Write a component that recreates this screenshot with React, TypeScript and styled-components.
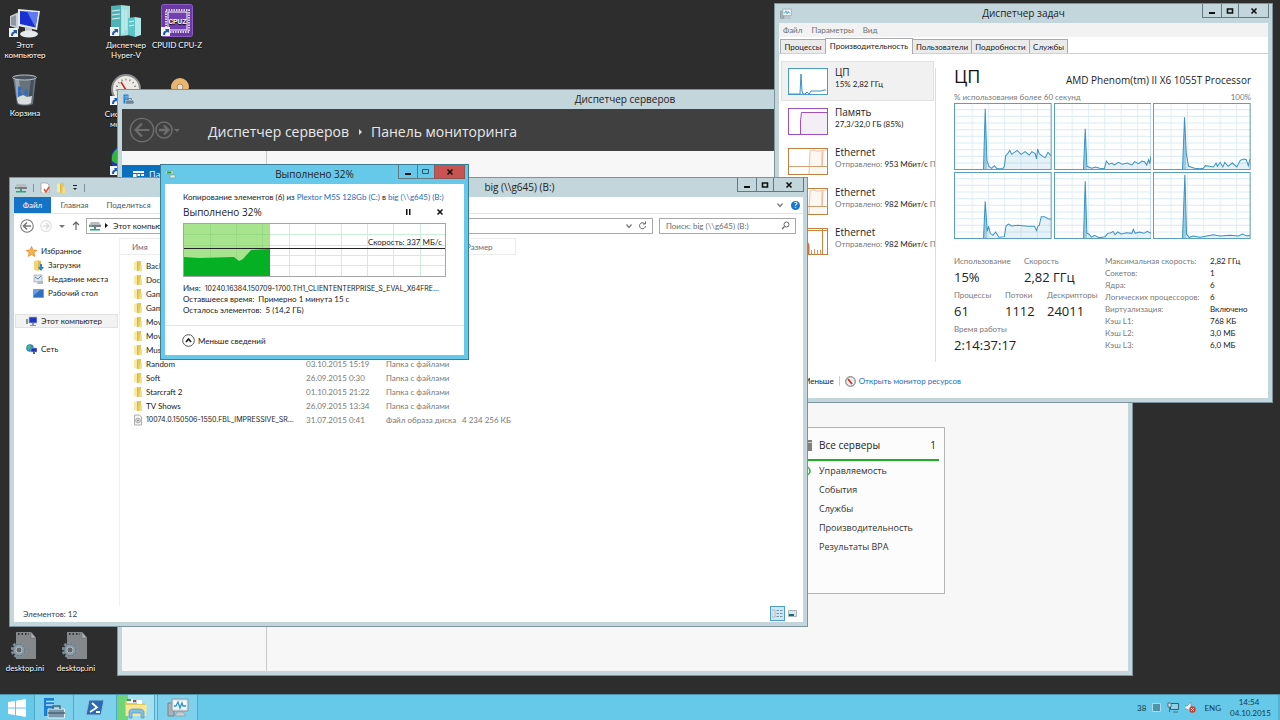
import React from "react";
import styled, { createGlobalStyle, css } from "styled-components";

const wide = `"Open Sans", "Noto Sans", sans-serif`;

const GlobalStyle = createGlobalStyle`
  *, *::before, *::after { box-sizing: border-box; }
  body {
    margin: 0;
    background: #2d2d2d;
    color: #222;
    font: 8px/12px Lato, "Noto Sans", sans-serif;
  }
  button, input { font: inherit; color: inherit; margin: 0; padding: 0; border: 0; background: none; }
  a { color: #1c6cc0; text-decoration: none; }
  h1, h2, h3, p, ul, dl, dd { margin: 0; padding: 0; font-weight: 400; }
  h1, h2, h3 { font-family: ${wide}; }
  ul { list-style: none; }
  svg { display: block; flex: none; }
`;

/* ---------- Desktop ---------- */

const Screen = styled.div`
  display: flex;
  flex-direction: column;
  min-height: 100vh;
`;

const Desktop = styled.main`
  position: relative;
  flex: 1;
  overflow: hidden;
`;

const Shortcut = styled.button<{ $x: number; $y: number }>`
  position: absolute;
  left: ${(p) => p.$x}px;
  top: ${(p) => p.$y}px;
  width: 52px;
  display: flex;
  flex-direction: column;
  align-items: center;
  gap: 2px;
  color: #fff;
  line-height: 10px;
  text-align: center;
  text-shadow: 0 1px 1px #000;
  white-space: nowrap;
`;

/* ---------- Window frame ---------- */

const Frame = styled.section<{ $x: number; $y: number; $w: number; $h: number; $active?: boolean }>`
  position: absolute;
  left: ${(p) => p.$x}px;
  top: ${(p) => p.$y}px;
  width: ${(p) => p.$w}px;
  height: ${(p) => p.$h}px;
  display: flex;
  flex-direction: column;
  padding: 0 4px 4px;
  border: 1px solid ${(p) => (p.$active ? "#3c7c92" : "#7d949c")};
  background: ${(p) => (p.$active ? "#66c9e9" : "#c3d6dc")};
`;

const TitleBar = styled.header<{ $lead?: number }>`
  display: grid;
  grid-template-columns: ${(p) => (p.$lead ? `${p.$lead}px 1fr auto` : "1fr auto 1fr")};
  align-items: center;
  flex: none;
  height: 19px;
`;

const TitleText = styled.h2`
  align-self: start;
  font-size: 10px;
  line-height: 18px;
  text-align: center;
`;

const TitleIcons = styled.div`
  display: flex;
  align-items: center;
  gap: 6px;
  padding-left: 1px;
`;

const Caption = styled.div`
  display: flex;
  justify-self: end;
  align-self: start;
  margin-right: -1px;
`;

const captionWidth = { min: 20, max: 18, close: 31 };

const CaptionButton = styled.button<{ $kind: "min" | "max" | "close"; $danger?: boolean }>`
  display: flex;
  align-items: center;
  justify-content: center;
  width: ${(p) => captionWidth[p.$kind]}px;
  height: 14px;
  margin-left: -1px;
  border: 1px solid #66787f;
  border-top: 0;
  ${(p) => p.$danger && css`background: #c75450; border-color: #8e5654;`}
`;

const Client = styled.div<{ $bg?: string }>`
  display: flex;
  flex-direction: column;
  flex: 1;
  min-height: 0;
  background: ${(p) => p.$bg ?? "#fff"};
`;

function WindowButtons({ danger }: { danger?: boolean }) {
  return (
    <Caption>
      <CaptionButton $kind="min" aria-label="Свернуть">
        <svg width="8" height="8"><path d="M1 5h6v2H1z" fill="#111" /></svg>
      </CaptionButton>
      <CaptionButton $kind="max" aria-label="Развернуть">
        <svg width="8" height="8">
          {danger
            ? <path d="M.5 1.500h6v4h-6z" fill="none" stroke="#2c5868" />
            : <path d="M1.500 2h5v4h-5z" fill="none" stroke="#111" strokeWidth="1.600" />}
        </svg>
      </CaptionButton>
      <CaptionButton $kind="close" $danger={danger} aria-label="Закрыть">
        <svg width="8" height="8"><path d="M1.500 1.500l5 5M6.500 1.500l-5 5" stroke="#111" strokeWidth="1.600" /></svg>
      </CaptionButton>
    </Caption>
  );
}

/* ---------- Server manager ---------- */

const ManagerHeader = styled.div`
  display: flex;
  align-items: center;
  flex: none;
  height: 42px;
  padding-left: 7px;
  background: #404040;
  color: #e8e8e8;
`;

const Crumbs = styled.h1`
  display: flex;
  align-items: center;
  gap: 7px;
  margin-left: 27px;
  padding-top: 3px;
  font-size: 14px;
  line-height: 20px;
`;

const ManagerBody = styled.div`
  display: flex;
  flex: 1;
`;

const ManagerNav = styled.nav`
  width: 145px;
  padding-top: 14px;
  border-right: 1px solid #c9c9c9;
`;

const ManagerNavItem = styled.a`
  display: flex;
  align-items: center;
  gap: 5px;
  height: 20px;
  padding-left: 11px;
  background: #0b6fc0;
  color: #fff;
  font-family: ${wide};
  font-size: 9px;
`;

const Dashboard = styled.div`
  flex: 1;
  display: flex;
  align-items: flex-start;
  padding: 276px 0 0 530px;
`;

const ServerCard = styled.article`
  width: 148px;
  height: 167px;
  padding: 7px 5px;
  border: 1px solid #b4b4b4;
  background: #fcfcfc;
`;

const CardHead = styled.h3`
  display: flex;
  align-items: center;
  height: 26px;
  padding: 0 3px 4px 0;
  border-bottom: 2px solid #1fae24;
  font-size: 10px;
  line-height: 20px;
`;

const CardName = styled.span`
  flex: 1;
  margin-left: 7px;
`;

const CardRow = styled.li`
  display: flex;
  align-items: center;
  height: 19px;
  padding-left: 16px;
  color: #333;
  font-family: ${wide};
  font-size: 9px;
  &:first-child { padding-left: 0; gap: 8px; }
`;

/* ---------- Task manager ---------- */

const MenuBar = styled.nav`
  display: flex;
  gap: 9px;
  flex: none;
  height: 14px;
  padding: 0 4px;
  background: #f2f2f2;
  color: #6f6f6f;
`;

const Tabs = styled.div`
  display: flex;
  align-items: flex-end;
  flex: none;
  height: 17px;
  padding-left: 2px;
  border-bottom: 1px solid #d0d0d0;
`;

const Tab = styled.button<{ $w: number; $on?: boolean }>`
  width: ${(p) => p.$w}px;
  height: ${(p) => (p.$on ? 16 : 14)}px;
  margin: 0 0 ${(p) => (p.$on ? -1 : 0)}px -1px;
  padding-bottom: ${(p) => (p.$on ? 2 : 0)}px;
  border: 1px solid #a9a9b2;
  border-bottom: 0;
  background: ${(p) => (p.$on ? "#fff" : "#ebebeb")};
  white-space: nowrap;
`;

const TaskBody = styled.div`
  display: flex;
  flex: 1;
  min-height: 0;
  padding: 7px 17px 0 2px;
`;

const MeterList = styled.ul`
  width: 155px;
  margin-right: 19px;
`;

const Meter = styled.li<{ $on?: boolean }>`
  display: flex;
  align-items: flex-start;
  gap: 6px;
  height: 40px;
  margin-right: 2px;
  padding: 6px 0 0 6px;
  border: 1px solid ${(p) => (p.$on ? "#e2e2e2" : "transparent")};
  background: ${(p) => (p.$on ? "#f1f1f1" : "transparent")};
  white-space: nowrap;
`;

const MeterText = styled.div`
  margin-top: -2px;
`;

const MeterName = styled.h3`
  font-size: 10px;
  line-height: 12px;
`;

const Muted = styled.span`
  color: #7a7a7a;
`;

const Divider = styled.div`
  width: 1px;
  height: 294px;
  margin: 7px 0 0 -20px;
  background: #dcdcdc;
`;

const Detail = styled.div`
  flex: 1;
  min-width: 0;
  padding-left: 18px;
`;

const Spread = styled.div`
  display: flex;
  justify-content: space-between;
  align-items: center;
  height: 30px;
  font: 10px/14px ${wide};
  padding-top: 8px;
`;

const BigName = styled.h1`
  color: #111;
  font-size: 18px;
  line-height: 24px;
  margin-top: -8px;
`;

const ScaleRow = styled.div`
  display: flex;
  justify-content: space-between;
  color: #7a7a7a;
  height: 12px;
`;

const GraphGrid = styled.div`
  display: grid;
  grid-template-columns: repeat(3, 1fr);
  gap: 2px;
  svg { width: 100%; height: 67px; }
`;

const Stats = styled.div`
  display: flex;
  padding-top: 16px;
`;

const StatRows = styled.div`
  width: 151px;
`;

const StatRow = styled.dl`
  display: flex;
  height: 34px;
`;

const Stat = styled.div<{ $w: number }>`
  width: ${(p) => p.$w}px;
  white-space: nowrap;
  dt { color: #7a7a7a; }
  dd { font: 13px/20px ${wide}; }
`;

const Specs = styled.dl`
  display: grid;
  grid-template-columns: 105px auto;
  grid-auto-rows: 12px;
  white-space: nowrap;
  dt { color: #7a7a7a; }
`;

const TaskFooter = styled.footer`
  display: flex;
  align-items: center;
  flex: none;
  height: 34px;
  padding-left: 24px;
`;

const FooterRule = styled.span`
  width: 1px;
  height: 10px;
  margin: 0 5px;
  background: #ccc;
`;

const FooterLink = styled.a`
  display: flex;
  align-items: center;
  gap: 3px;
`;

const cores: string[] = [
  "88,198 93,17 98,172 104,190 112,196 120,188 128,197 145,197 150,190 154,158 160,152 166,142 172,154 188,142 200,154 212,146 224,156 232,146 242,152 246,168 249,138 254,152 264,160 272,164 280,148 289,158",
  "88,198 93,77 98,190 112,196 124,192 136,196 150,197 156,174 164,184 172,180 180,186 192,178 204,184 218,180 232,186 240,176 252,182 262,174 270,176 276,186 282,170 285,182 289,160",
  "88,198 94,43 99,150 106,190 124,196 140,197 150,196 156,188 168,190 180,192 188,180 192,190 200,178 208,192 214,178 224,190 236,180 250,192 260,172 270,168 278,170 284,188 289,168",
  "88,198 93,88 99,178 103,162 108,184 116,190 124,180 134,196 150,194 155,162 162,156 172,162 190,160 220,163 240,163 246,176 250,162 254,160 260,134 270,134 280,140 289,142",
  "88,198 93,28 98,184 104,186 112,196 120,190 134,197 152,194 160,184 170,182 176,178 182,188 190,180 200,186 216,182 232,184 236,172 242,184 254,180 268,184 278,178 289,184",
  "88,198 95,8 100,186 108,196 120,192 140,196 160,192 180,188 200,192 230,190 255,192 266,186 280,192 289,190",
];

function CoreGraph({ points }: { points: string }) {
  return (
    <svg viewBox="0 0 291 201" preserveAspectRatio="none">
      <rect width="291" height="201" fill="#fff" />
      {[54, 103, 151, 200, 249].map((x) => <path key={x} d={`M${x} 0V201`} stroke="#e2eff5" strokeWidth="3" />)}
      {[20, 40, 60, 80, 100, 120, 140, 160, 180].map((y) => <path key={y} d={`M0 ${y}H291`} stroke="#d9ebf3" strokeWidth="3" />)}
      <polygon points={`${points} 289,200`} fill="#3b94c4" fillOpacity="0.120" />
      <polygon points={points.split(" ").slice(0, 3).join(" ") + " 99,198"} fill="#3b94c4" fillOpacity="0.400" />
      <polyline points={points} fill="none" stroke="#3a93c3" strokeWidth="3" />
      <rect x="1.500" y="1.500" width="288" height="198" fill="none" stroke="#5b9fc0" strokeWidth="3" />
    </svg>
  );
}

function Thumb({ color, children }: { color: string; children: React.ReactNode }) {
  return (
    <svg width="41" height="28" fill="none">
      <rect x="0.500" y="0.500" width="39" height="26" fill="#fff" stroke={color} />
      {children}
    </svg>
  );
}

function EthernetThumb() {
  return (
    <Thumb color="#c08040">
      <path d="M21 26l1-23 2-1h3l1 1h9v23z" fill="#fdf7f2" />
      <path d="M21 26l1-23 2-1h3l1 1h4l2-1v17l1-17h4" stroke="#e8b090" strokeWidth="0.800" />
      <path d="M1 18.500h38" stroke="#d2a070" />
    </Thumb>
  );
}

const meters = [
  { name: "ЦП", plain: "15%  2,82 ГГц", on: true, art: (
    <Thumb color="#4a9cc3"><path d="M1 26h11l1-20 1 17 1 3h2l2-2 2 2 2-3h10l3-1h2" stroke="#3a93c3" /></Thumb>
  ) },
  { name: "Память", plain: "27,3/32,0 ГБ (85%)", art: (
    <Thumb color="#a050b8"><path d="M13 26V5h26v21z" fill="#f4eff6" /><path d="M12.500 26V13l1-8.500H39" stroke="#a050b8" /></Thumb>
  ) },
  { name: "Ethernet", rate: "953 Мбит/с", art: <EthernetThumb /> },
  { name: "Ethernet", rate: "982 Мбит/с", art: <EthernetThumb /> },
  { name: "Ethernet", rate: "982 Мбит/с", art: (
    <Thumb color="#c08040">
      <path d="M19 26V13l2 4v9z" fill="#d2703a" stroke="#d2703a" />
      <path d="M23.500 26v-4M26.500 26v-5M29.500 26v-4M32.500 26v-4" stroke="#dc9060" />
      <path d="M34.500 1v25M1 2.500h38" stroke="#d0823c" />
    </Thumb>
  ) },
];

const statRows = [
  [["Использование", "15%", 70], ["Скорость", "2,82 ГГц", 70]],
  [["Процессы", "61", 51], ["Потоки", "1112", 42], ["Дескрипторы", "24011", 56]],
  [["Время работы", "2:14:37:17", 90]],
] as [string, string, number][][];

const specs = [
  ["Максимальная скорость:", "2,82 ГГц"], ["Сокетов:", "1"], ["Ядра:", "6"],
  ["Логических процессоров:", "6"], ["Виртуализация:", "Включено"],
  ["Кэш L1:", "768 КБ"], ["Кэш L2:", "3,0 МБ"], ["Кэш L3:", "6,0 МБ"],
];

/* ---------- Explorer ---------- */

const RibbonTabs = styled.nav`
  display: flex;
  align-items: center;
  flex: none;
  height: 17px;
  padding-right: 3px;
  border-bottom: 1px solid #e4e4e4;
  color: #555;
`;

const RibbonTab = styled.button<{ $w: number; $primary?: boolean }>`
  width: ${(p) => p.$w}px;
  height: 16px;
  ${(p) => p.$primary && css`background: #1473c6; color: #fff;`}
`;

const Grow = styled.span`
  flex: 1;
`;

const HelpButton = styled.button`
  width: 9px;
  height: 9px;
  margin-left: 7px;
  border-radius: 50%;
  background: #1678d2;
  color: #fff;
  font-weight: 700;
  line-height: 9px;
`;

const AddressRow = styled.div`
  display: flex;
  align-items: center;
  gap: 6px;
  flex: none;
  height: 24px;
  padding: 0 7px 1px 6px;
`;

const AddressBox = styled.div`
  display: flex;
  align-items: center;
  gap: 4px;
  flex: 1;
  height: 16px;
  padding: 0 3px 0 2px;
  border: 1px solid #a8a8a8;
`;

const SearchBox = styled.label`
  display: flex;
  align-items: center;
  width: 137px;
  height: 16px;
  padding: 0 5px 0 6px;
  border: 1px solid #a8a8a8;
  input { flex: 1; min-width: 0; outline: 0; }
  input::placeholder { color: #6c6c6c; opacity: 1; }
`;

const ExplorerBody = styled.div`
  display: flex;
  flex: 1;
  min-height: 0;
`;

const Tree = styled.ul`
  width: 106px;
  padding-top: 6px;
  border-right: 1px solid #f0f0f0;
`;

const TreeItem = styled.li<{ $depth?: number; $on?: boolean; $gap?: boolean }>`
  display: flex;
  align-items: center;
  gap: 4px;
  height: 14px;
  margin: ${(p) => (p.$gap ? 14 : 0)}px 1px 0;
  padding-left: ${(p) => (p.$depth ? 18 : 11)}px;
  white-space: nowrap;
  ${(p) => p.$on && css`background: #f2f2f2; outline: 1px solid #e2e2e2; outline-offset: -1px;`}
`;

const FileTable = styled.table`
  align-self: flex-start;
  width: 396px;
  border-collapse: separate;
  border-spacing: 0;
  table-layout: fixed;
  th {
    height: 17px;
    padding: 0 0 0 4px;
    border: solid #ececec;
    border-width: 1px 1px 1px 0;
    color: #5a6b86;
    font-weight: 400;
    text-align: left;
  }
  th:first-child { padding-left: 12px; }
  td { height: 14px; padding: 0 0 0 4px; color: #7a7a7a; white-space: nowrap; }
  td:first-child { padding-left: 13px; color: #222; }
  td:last-child { padding: 0 6px 0 0; text-align: right; }
  tbody::before { content: ""; display: block; height: 4px; }
`;

const FileName = styled.span`
  display: flex;
  align-items: center;
  gap: 3px;
`;

const LongName = styled.span`
  font-family: Inter, sans-serif;
  font-size: 7px;
`;

const StatusBar = styled.footer`
  display: flex;
  align-items: center;
  flex: none;
  height: 16px;
  padding: 0 3px 1px 9px;
  color: #2c3f5c;
`;

const ViewButton = styled.button<{ $on?: boolean }>`
  display: grid;
  place-items: center;
  width: 15px;
  height: 15px;
  border: 1px solid ${(p) => (p.$on ? "#4f9cc6" : "transparent")};
  background: ${(p) => (p.$on ? "#cbe8f6" : "transparent")};
`;

const FOLDER = "Папка с файлами";
const files: [string, string, string, string][] = [
  ["Backup", "", "", ""],
  ["Docs", "", "", ""],
  ["Games", "", "", ""],
  ["Games 2", "", "", ""],
  ["Movies", "", "", ""],
  ["Movies 2", "", "", ""],
  ["Music", "", "", ""],
  ["Random", "03.10.2015 15:19", FOLDER, ""],
  ["Soft", "26.09.2015 0:30", FOLDER, ""],
  ["Starcraft 2", "01.10.2015 21:22", FOLDER, ""],
  ["TV Shows", "26.09.2015 13:34", FOLDER, ""],
  ["10074.0.150506-1550.FBL_IMPRESSIVE_SR...", "31.07.2015 0:41", "Файл образа диска", "4 234 256 КБ"],
];

/* ---------- Copy dialog ---------- */

const CopyBody = styled.div`
  flex: 1;
  padding: 8px 18px 0;
`;

const CopyHead = styled.div`
  display: flex;
  align-items: center;
  gap: 22px;
  height: 16px;
  padding: 2px 2px 0 0;
  font: 10px/14px ${wide};
`;

const GlyphButton = styled.button`
  display: grid;
  place-items: center;
  width: 9px;
  height: 9px;
`;

const SpeedPanel = styled.div`
  position: relative;
  height: 54px;
  margin: 4px 0 6px;
  svg { width: 100%; height: 100%; }
`;

const SpeedLabel = styled.span`
  position: absolute;
  right: 4px;
  top: 13px;
`;

const CopyLine = styled.p`
  line-height: 11px;
  white-space: nowrap;
`;

const CopyFooter = styled.footer`
  display: flex;
  align-items: center;
  flex: none;
  height: 30px;
  padding-left: 17px;
  border-top: 1px solid #e4e4e4;
`;

const MoreButton = styled.button`
  display: flex;
  align-items: center;
  gap: 3px;
`;

/* ---------- Taskbar ---------- */

const Taskbar = styled.footer`
  display: flex;
  flex: none;
  height: 26px;
  border-top: 1px solid #4a93ab;
  background: #66c9e9;
`;

const TaskButton = styled.button<{ $w: number; $open?: boolean; $progress?: boolean; $stack?: boolean }>`
  display: grid;
  place-items: center;
  width: ${(p) => p.$w}px;
  border-right: 1px solid #4ea9c8;
  ${(p) => p.$open && css`background: #7dd1ed;`}
  ${(p) => p.$progress && css`background: linear-gradient(90deg, #6fd478 0 11px, #a4dff2 11px 100%);`}
  ${(p) => p.$stack && css`box-shadow: 2px 0 0 #8fd6ee, 3px 0 0 #4ea9c8; margin-right: 3px;`}
`;

const Tray = styled.div`
  display: flex;
  align-items: center;
  gap: 6px;
  margin-left: auto;
  padding-right: 10px;
  border-right: 2px solid #55b4d4;
  color: #133a48;
`;

const Clock = styled.time`
  width: 38px;
  margin-left: 3px;
  line-height: 11px;
  text-align: center;
  white-space: nowrap;
`;

/* ---------- Icons ---------- */

const ShortcutArrow = () => (
  <g>
    <path d="M0 21h9v9H0z" fill="#eef3f8" />
    <path d="M2 29c0-3 1-4 3-4.500L4 23h4v4l-1-1c-2 0-3 1-3 3z" fill="#2458a8" />
  </g>
);

const ComputerIcon = () => (
  <svg width="32" height="34" viewBox="0 -3 32 34">
    <path d="M1 9l9-4v17l-9-3z" fill="#c9ced4" />
    <path d="M2 10l5-2v11l-5-1z" fill="#8f98a1" />
    <path d="M9 2l22 2-3 19-19-4z" fill="#e7ebef" />
    <path d="M11 4l18 1.500-2.500 15-15.500-3.500z" fill="#1b30d4" />
    <path d="M18 4.600l11 1-2.500 15z" fill="#5f7bf0" />
    <path d="M16 20l7 1v4h-7z" fill="#c3c9cf" />
    <ellipse cx="20" cy="27" rx="9" ry="3.500" fill="#e8ebee" />
    <ShortcutArrow />
  </svg>
);

const BinIcon = () => (
  <svg width="28" height="32" viewBox="0 0 28 32">
    <path d="M2 3h23l-3 27c-4 2-12 2-16 0z" fill="#68727d" />
    <path d="M4 5h4l2 20-4 2z" fill="#9aa5af" />
    <path d="M20 5h3l-2 20-4 3z" fill="#46505a" />
    <path d="M7 12l4 2-2 4 3 2-5 3zM13 18l3-4 1 6-3 2z" fill="#2a6cc8" />
    <path d="M6 24l6-3 4 2 5-1-1 7c-3 2-10 2-13 0z" fill="#d9dde0" />
    <ellipse cx="13.500" cy="3.500" rx="12" ry="2.500" fill="#4a535c" stroke="#b8c1c9" />
  </svg>
);

const ServersIcon = () => (
  <svg width="32" height="34" viewBox="0 -2 32 34">
    <path d="M1 0l10-1v31l-10-2z" fill="#4fb2b6" />
    <path d="M11-1l9 1v29l-9 1z" fill="#a5dfe0" />
    <path d="M2 5l8-1M2 9l8-1M2 13l8-1M13 3v24M16 4v20" stroke="#d5f3f3" fill="none" />
    <path d="M18 12l7-1v20l-7-2z" fill="#5fc4c8" />
    <path d="M25 11l6 1v17l-6 2z" fill="#b2e6e7" />
    <path d="M19 16l5-1M19 20l5-1" stroke="#e2f8f8" />
    <ShortcutArrow />
  </svg>
);

const CpuIcon = () => (
  <svg width="32" height="34" viewBox="0 -2 32 34">
    <rect x="0.500" y="-1.500" width="31" height="32" rx="2" fill="#6a3aa6" stroke="#8a5cc4" />
    <rect x="5" y="4" width="23" height="22" fill="none" stroke="#fff" strokeWidth="1.500" strokeDasharray="1.500 1" />
    <rect x="7" y="6" width="19" height="18" fill="#7340b2" stroke="#fff" />
    <text x="16.500" y="18" textAnchor="middle" fontSize="7" fontWeight="700" fontFamily="Roboto" fill="#fff">CPUZ</text>
    <ShortcutArrow />
  </svg>
);

const GaugeIcon = () => (
  <svg width="32" height="34" viewBox="0 -2 32 34">
    <circle cx="16" cy="14" r="15" fill="#8b8e90" />
    <circle cx="16" cy="14" r="13" fill="#eceae4" />
    <circle cx="16" cy="14" r="9.500" fill="none" stroke="#777" strokeWidth="2" strokeDasharray="1 3" />
    <path d="M16 15L11 7" stroke="#c02828" strokeWidth="1.500" />
    <ShortcutArrow />
  </svg>
);

const DiscIcon = () => (
  <svg width="32" height="34" viewBox="0 -4 32 34">
    <path d="M3 14l9-5h10l9 5-15 8z" fill="#1c1c1c" />
    <circle cx="16" cy="10" r="9" fill="#e9b672" />
    <circle cx="16" cy="10" r="3" fill="#e3e3e3" stroke="#b98a50" />
  </svg>
);

const GlobeIcon = () => (
  <svg width="32" height="34" viewBox="0 -2 32 34">
    <circle cx="15" cy="14" r="14" fill="#2038b8" />
    <path d="M2 11c2-6 7-10 12-10l-4 7 3 5-6 6-5-3z" fill="#35b53c" />
    <ShortcutArrow />
  </svg>
);

const IniIcon = () => (
  <svg width="28" height="30" viewBox="0 0 28 30">
    <path d="M5 1h15l5 6v21H5z" fill="#85888a" />
    <path d="M20 1l5 6h-5z" fill="#b2b5b7" stroke="#5b5e60" strokeWidth="0.500" />
    <path d="M7 3h11" stroke="#333" strokeWidth="2" strokeDasharray="1.500 2" />
    <circle cx="8" cy="19" r="6" fill="#8b9aa4" stroke="#5f707c" />
    <circle cx="8" cy="19" r="7" fill="none" stroke="#7d8e99" strokeWidth="2.500" strokeDasharray="2.700 1.700" />
    <circle cx="8" cy="19" r="3" fill="#62676b" stroke="#b0bac1" />
  </svg>
);

const FolderIcon = () => (
  <svg width="10" height="12" viewBox="0 0 10 12">
    <path d="M1 2l4-1v10l-4-1z" fill="#f7e9a6" />
    <path d="M4 1h4v7l1 3H5z" fill="#e6c95c" />
    <path d="M7 5h2v6H6z" fill="#f2dd88" />
    <path d="M4.500 2v9" stroke="#c9a93f" strokeWidth="0.700" />
  </svg>
);

const DiskImageIcon = () => (
  <svg width="10" height="12" viewBox="0 0 10 12">
    <path d="M1.500 1h5l2 2v8h-7z" fill="#f5f5f5" stroke="#999" strokeWidth="0.800" />
    <circle cx="5" cy="6.500" r="2.400" fill="#ddd" stroke="#888" strokeWidth="0.600" />
    <circle cx="5" cy="6.500" r="0.700" fill="#666" />
  </svg>
);

const DriveIcon = () => (
  <svg width="12" height="10" viewBox="0 0 12 10">
    <path d="M2 1h8l2 3v2H0V4z" fill="#b9bdc1" />
    <path d="M0 4h12v2H0z" fill="#777d82" />
    <path d="M1 4.500h2v1H1z" fill="#5fe068" />
    <path d="M5 6h2v2h4v1.500H1V8h4z" fill="#25a878" />
  </svg>
);

const StarIcon = () => (
  <svg width="11" height="11" viewBox="0 0 11 11">
    <path d="M5.500 0.500l1.500 3.500 3.800.3-2.900 2.400 1 3.700-3.400-2-3.300 2 1-3.700L.3 4.300 4 4z" fill="#f8b648" stroke="#e07c28" strokeWidth="0.700" />
  </svg>
);

const DownloadsIcon = () => (
  <svg width="11" height="11" viewBox="0 0 11 11">
    <path d="M1 1l5-1v11l-5-1z" fill="#efd779" />
    <path d="M5 1h3v9H5z" fill="#dcb94a" />
    <path d="M7 4h2v3h2l-3 4-3-4h2z" fill="#2683d8" />
  </svg>
);

const RecentIcon = () => (
  <svg width="11" height="11" viewBox="0 0 11 11">
    <path d="M1 1h8v7H1z" fill="#dfe5ea" stroke="#98a3ad" strokeWidth="0.700" />
    <path d="M2 3l3 2 3-3" stroke="#5a88b0" fill="none" />
    <path d="M5 7h5v3H4z" fill="#b3bcc4" />
  </svg>
);

const DesktopIcon = () => (
  <svg width="11" height="11" viewBox="0 0 11 11">
    <path d="M.5 1.500h10v8H.5z" fill="#2f6fc4" stroke="#8e9aa8" />
    <path d="M1 2h6L1 7z" fill="#6ea2e4" />
  </svg>
);

const PcIcon = () => (
  <svg width="11" height="11" viewBox="0 0 11 11">
    <path d="M0 3h2v5H0z" fill="#8a939b" />
    <path d="M3 1h8v6H3z" fill="#1e36c6" stroke="#b4bcc6" strokeWidth="0.700" />
    <path d="M6 7h2v2h2v1H4V9h2z" fill="#8a939b" />
  </svg>
);

const NetIcon = () => (
  <svg width="11" height="11" viewBox="0 0 11 11">
    <circle cx="4" cy="4" r="3.800" fill="#2a7fd0" />
    <path d="M1 3l3-3 1 3-3 4z" fill="#41c266" />
    <path d="M5 4h6v4H5z" fill="#1c35b8" stroke="#a8b2c0" strokeWidth="0.600" />
    <path d="M7 8h2v2H7z" fill="#5c6672" />
  </svg>
);

const CopyIcon = () => (
  <svg width="10" height="9" viewBox="0 0 10 9">
    <path d="M0 1h7v3H0z" fill="#f1f5ee" stroke="#87a187" strokeWidth="0.600" />
    <path d="M1 1.500h4.500v2H1z" fill="#19a02c" />
    <path d="M4 5h5v3H4z" fill="#e5e9e5" stroke="#7d9a84" strokeWidth="0.600" />
  </svg>
);

const MonitorIcon = ({ size }: { size: number }) => (
  <svg width={size} height={size} viewBox="0 0 22 22">
    <path d="M1 6h6v13H1z" fill="#a9b2b7" stroke="#788388" />
    <path d="M5 2h16v12H5z" fill="#e6eaec" stroke="#8c979c" />
    <path d="M7 4h12v8H7z" fill="#f3fbfe" />
    <path d="M7 9h2l2-4 2 6 2-5 1 3h3" stroke="#2f93c4" fill="none" strokeWidth="1.300" />
    <path d="M10 15h6l3 4H8z" fill="#c8ced1" stroke="#89949a" strokeWidth="0.600" />
  </svg>
);

const ServerToolIcon = ({ size }: { size: number }) => (
  <svg width={size} height={size} viewBox="0 0 22 22">
    <path d="M1 1h10v18H1z" fill="#1a7fd4" />
    <path d="M3 4.500h8M3 8h8" stroke="#bfe0f7" strokeWidth="1.300" />
    <path d="M5 12h16.500v9H5z" fill="#7c98aa" stroke="#eaf2f6" />
    <path d="M10 12V9h7v3M5 16h17" fill="none" stroke="#4c6676" strokeWidth="1.400" />
  </svg>
);

const Arrow = ({ d, color = "#555" }: { d: "down" | "right"; color?: string }) => (
  <svg width="8" height="8">
    <path d={d === "down" ? "M1 3h6L4 6z" : "M3 1l3 3-3 3z"} fill={color} />
  </svg>
);

const Chevron = () => (
  <svg width="8" height="8"><path d="M1.500 2.500L4 5.500l2.500-3" fill="none" stroke="#777" strokeWidth="1.200" /></svg>
);

const CircleArrow = ({ r, flip, color, w = 1 }: { r: number; flip?: boolean; color: string; w?: number }) => (
  <svg width={r * 2 + 2} height={r * 2 + 2} viewBox="-14 -14 28 28">
    <circle r="12.500" fill="none" stroke={color} strokeWidth={(w * 12.5) / r} />
    <path transform={flip ? "scale(-1 1)" : undefined} d="M8 0H-6M0-7L-7 0 0 7" fill="none" stroke={color} strokeWidth={(w * 1.5 * 12.5) / r} />
  </svg>
);

/* ---------- Windows ---------- */

const shortcuts = [
  { x: -1, y: 4, icon: <ComputerIcon />, label: ["Этот", "компьютер"] },
  { x: -1, y: 74, icon: <BinIcon />, label: ["Корзина"] },
  { x: 100, y: 4, icon: <ServersIcon />, label: ["Диспетчер", "Hyper-V"] },
  { x: 151, y: 4, icon: <CpuIcon />, label: ["CPUID CPU-Z"] },
  { x: 100, y: 73, icon: <GaugeIcon />, label: ["Системный", "монитор"] },
  { x: 154, y: 73, icon: <DiscIcon />, label: [] },
  { x: 100, y: 143, icon: <GlobeIcon />, label: [] },
  { x: -1, y: 631, icon: <IniIcon />, label: ["desktop.ini"] },
  { x: 50, y: 631, icon: <IniIcon />, label: ["desktop.ini"] },
];

function ServerManager() {
  return (
    <Frame $x={117} $y={89} $w={1016} $h={587}>
      <TitleBar>
        <TitleIcons><ServerToolIcon size={11} /></TitleIcons>
        <TitleText>Диспетчер серверов</TitleText>
        <Grow />
      </TitleBar>
      <Client $bg="#f7f7f7">
        <ManagerHeader>
          <CircleArrow r={12} color="#6e6e6e" w={1.5} />
          <CircleArrow r={8} color="#6e6e6e" w={1.5} flip />
          <Arrow d="down" color="#6e6e6e" />
          <Crumbs>Диспетчер серверов <Arrow d="right" color="#ddd" /> Панель мониторинга</Crumbs>
        </ManagerHeader>
        <ManagerBody>
          <ManagerNav>
            <ManagerNavItem href="#dashboard">
              <svg width="11" height="9"><path d="M0 0h11v9H0z" fill="#fff" /><path d="M0 2.500h11M4 2.500V9M7.500 2.500V9M4 5.500h7" stroke="#0b6fc0" /></svg>
              Панель
            </ManagerNavItem>
          </ManagerNav>
          <Dashboard>
            <ServerCard>
              <CardHead>
                <svg width="9" height="11"><path d="M0 0h4v11H0zM5 0h4v11H5z" fill="#808080" /><path d="M0 2.500h9" stroke="#ccc" /></svg>
                <CardName>Все серверы</CardName>
                <span>1</span>
              </CardHead>
              <ul>
                <CardRow>
                  <svg width="8" height="10"><circle cx="3" cy="5" r="4" fill="none" stroke="#1fae24" strokeWidth="1.500" /></svg>
                  Управляемость
                </CardRow>
                {["События", "Службы", "Производительность", "Результаты BPA"].map((t) => <CardRow key={t}>{t}</CardRow>)}
              </ul>
            </ServerCard>
          </Dashboard>
        </ManagerBody>
      </Client>
    </Frame>
  );
}

function TaskManager() {
  return (
    <Frame $x={774} $y={3} $w={499} $h={400}>
      <TitleBar>
        <TitleIcons><MonitorIcon size={12} /></TitleIcons>
        <TitleText>Диспетчер задач</TitleText>
        <WindowButtons />
      </TitleBar>
      <Client>
        <MenuBar>
          <button>Файл</button><button>Параметры</button><button>Вид</button>
        </MenuBar>
        <Tabs role="tablist">
          <Tab role="tab" $w={46}>Процессы</Tab>
          <Tab role="tab" $w={88} $on aria-selected>Производительность</Tab>
          <Tab role="tab" $w={60}>Пользователи</Tab>
          <Tab role="tab" $w={59}>Подробности</Tab>
          <Tab role="tab" $w={39}>Службы</Tab>
        </Tabs>
        <TaskBody>
          <MeterList>
            {meters.map((m, i) => (
              <Meter key={i} $on={m.on}>
                {m.art}
                <MeterText>
                  <MeterName>{m.name}</MeterName>
                  {m.plain ?? <><Muted>Отправлено:</Muted> {m.rate} <Muted>П</Muted></>}
                </MeterText>
              </Meter>
            ))}
          </MeterList>
          <Divider />
          <Detail>
            <Spread><BigName>ЦП</BigName>AMD Phenom(tm) II X6 1055T Processor</Spread>
            <ScaleRow><span>% использования более 60 секунд</span><span>100%</span></ScaleRow>
            <GraphGrid>{cores.map((c, i) => <CoreGraph key={i} points={c} />)}</GraphGrid>
            <Stats>
              <StatRows>
                {statRows.map((row, i) => (
                  <StatRow key={i}>
                    {row.map(([label, value, w]) => (
                      <Stat key={label} $w={w}><dt>{label}</dt><dd>{value}</dd></Stat>
                    ))}
                  </StatRow>
                ))}
              </StatRows>
              <Specs>
                {specs.map(([k, v]) => <React.Fragment key={k}><dt>{k}</dt><dd>{v}</dd></React.Fragment>)}
              </Specs>
            </Stats>
          </Detail>
        </TaskBody>
        <TaskFooter>
          <button>Меньше</button>
          <FooterRule />
          <FooterLink href="#resmon">
            <svg width="11" height="11"><circle cx="5.500" cy="5.500" r="4.800" fill="#f2eeee" stroke="#666" /><path d="M3 3l4 5" stroke="#c0392b" strokeWidth="1.800" /></svg>
            Открыть монитор ресурсов
          </FooterLink>
        </TaskFooter>
      </Client>
    </Frame>
  );
}

function Explorer() {
  return (
    <Frame $x={9} $y={177} $w={799} $h={450}>
      <TitleBar $lead={287}>
        <TitleIcons>
          <DriveIcon />
          <svg width="1" height="8"><path d="M0 0h1v8H0z" fill="#7d949c" /></svg>
          <svg width="10" height="11"><path d="M1 1h6l2 2v8H1z" fill="#fff" stroke="#999" strokeWidth="0.700" /><path d="M4 7l2 3 3-5" stroke="#e0562e" fill="none" strokeWidth="1.500" /></svg>
          <FolderIcon />
          <svg width="6" height="8"><path d="M1 1h4v1H1zM1 4h4L3 6z" fill="#222" /></svg>
          <svg width="1" height="8"><path d="M0 0h1v8H0z" fill="#7d949c" /></svg>
        </TitleIcons>
        <TitleText>big (\\g645) (B:)</TitleText>
        <WindowButtons />
      </TitleBar>
      <Client>
        <RibbonTabs>
          <RibbonTab $w={37} $primary>Файл</RibbonTab>
          <RibbonTab $w={47}>Главная</RibbonTab>
          <RibbonTab $w={61}>Поделиться</RibbonTab>
          <Grow />
          <Chevron />
          <HelpButton aria-label="Справка">?</HelpButton>
        </RibbonTabs>
        <AddressRow>
          <CircleArrow r={6} color="#777" />
          <CircleArrow r={5} color="#ddd" flip />
          <Arrow d="down" color="#777" />
          <svg width="8" height="9"><path d="M4 9V1M1 4l3-3 3 3" fill="none" stroke="#666" strokeWidth="1.200" /></svg>
          <AddressBox>
            <DriveIcon />
            <svg width="4" height="7"><path d="M0 1l3 2.500L0 6z" fill="#111" /></svg>
            <span>Этот компьютер</span>
            <Grow />
            <Chevron />
            <svg width="12" height="9"><path d="M8.500 5a3 3 0 1 1-1-2.500M8.500.5V3H6" fill="none" stroke="#666" /></svg>
          </AddressBox>
          <SearchBox>
            <input type="search" placeholder="Поиск: big (\\g645) (B:)" aria-label="Поиск" />
            <svg width="9" height="9"><circle cx="5.500" cy="3.500" r="2.500" fill="none" stroke="#666" /><path d="M3.500 5.500L1 8" stroke="#666" strokeWidth="1.300" /></svg>
          </SearchBox>
        </AddressRow>
        <ExplorerBody>
          <Tree>
            <TreeItem><StarIcon />Избранное</TreeItem>
            <TreeItem $depth={1}><DownloadsIcon />Загрузки</TreeItem>
            <TreeItem $depth={1}><RecentIcon />Недавние места</TreeItem>
            <TreeItem $depth={1}><DesktopIcon />Рабочий стол</TreeItem>
            <TreeItem $on $gap><PcIcon />Этот компьютер</TreeItem>
            <TreeItem $gap><NetIcon />Сеть</TreeItem>
          </Tree>
          <FileTable>
            <colgroup><col width="182" /><col width="80" /><col width="80" /><col width="54" /></colgroup>
            <thead><tr><th>Имя</th><th aria-label="Дата изменения" /><th aria-label="Тип" /><th>Размер</th></tr></thead>
            <tbody>
              {files.map(([name, date, type, size]) => (
                <tr key={name}>
                  <td>
                    {size
                      ? <FileName><DiskImageIcon /><LongName>{name}</LongName></FileName>
                      : <FileName><FolderIcon />{name}</FileName>}
                  </td>
                  <td>{date}</td><td>{type}</td><td>{size}</td>
                </tr>
              ))}
            </tbody>
          </FileTable>
        </ExplorerBody>
        <StatusBar>
          Элементов: 12
          <Grow />
          <ViewButton $on aria-label="Таблица">
            <svg width="11" height="9"><path d="M0 1h3v7H0z" fill="#e4e8ea" stroke="#8fa3ae" strokeWidth="0.600" /><path d="M4.500 1.500h6M4.500 4.500h6M4.500 7.500h6" stroke="#7b93a2" strokeDasharray="2.500 1" /></svg>
          </ViewButton>
          <ViewButton aria-label="Крупные значки">
            <svg width="9" height="7"><path d="M.5.5h8v6h-8z" fill="#d8e8ee" stroke="#a9b4ba" /><path d="M1 4h5v2H1z" fill="#1f6a78" /></svg>
          </ViewButton>
        </StatusBar>
      </Client>
    </Frame>
  );
}

function CopyDialog() {
  return (
    <Frame $x={160} $y={164} $w={309} $h={196} $active>
      <TitleBar>
        <TitleIcons><CopyIcon /></TitleIcons>
        <TitleText>Выполнено 32%</TitleText>
        <WindowButtons danger />
      </TitleBar>
      <Client>
        <CopyBody>
          <CopyLine>
            Копирование элементов (6) из <a href="#c">Plextor M5S 128Gb (C:)</a> в <a href="#b">big (\\g645) (B:)</a>
          </CopyLine>
          <CopyHead>
            Выполнено 32%
            <Grow />
            <GlyphButton aria-label="Пауза"><svg width="5" height="6"><path d="M0 0h1.500v6H0zM3 0h1.500v6H3z" fill="#111" /></svg></GlyphButton>
            <GlyphButton aria-label="Отмена"><svg width="6" height="6"><path d="M.5.5l5 5M5.500.5l-5 5" stroke="#111" strokeWidth="1.500" /></svg></GlyphButton>
          </CopyHead>
          <SpeedPanel>
            <svg viewBox="0 0 263 54" preserveAspectRatio="none">
              <rect x="0.500" y="0.500" width="262" height="53" fill="#fff" />
              <rect x="1" y="1" width="86" height="52" fill="#a8e48e" />
              {[27, 53, 79, 106, 132, 158, 184, 210, 237].map((x) => <path key={x} d={`M${x + 0.5} 1V53`} stroke={x < 87 ? "#98da84" : "#cdeed8"} />)}
              {[11.5, 22.5, 32.5, 42.5].map((y) => <path key={y} d={`M87 ${y}H262`} stroke="#cdeed8" />)}
              <path d="M1 11.500H87M1 22.500H87" stroke="#98da84" />
              <path d="M1 34l15 1 35-1 5 4 4-2 8-9 19-1v27H1z" fill="#06b025" />
              <path d="M1 25.500H262" stroke="#222" />
              <rect x="0.500" y="0.500" width="262" height="53" fill="none" stroke="#a6a6a6" />
            </svg>
            <SpeedLabel>Скорость: 337 МБ/с</SpeedLabel>
          </SpeedPanel>
          <CopyLine>Имя:&nbsp; <LongName>10240.16384.150709-1700.TH1_CLIENTENTERPRISE_S_EVAL_X64FRE...</LongName></CopyLine>
          <CopyLine>Оставшееся время:&nbsp; Примерно 1 минута 15 с</CopyLine>
          <CopyLine>Осталось элементов:&nbsp; 5 (14,2 ГБ)</CopyLine>
        </CopyBody>
        <CopyFooter>
          <MoreButton>
            <svg width="13" height="13"><circle cx="6.500" cy="6.500" r="5.800" fill="#fff" stroke="#555" /><path d="M4 8l2.500-3L9 8" fill="none" stroke="#111" strokeWidth="1.500" /></svg>
            Меньше сведений
          </MoreButton>
        </CopyFooter>
      </Client>
    </Frame>
  );
}

export default function App() {
  return (
    <Screen>
      <GlobalStyle />
      <Desktop>
        {shortcuts.map((s, i) => (
          <Shortcut key={i} $x={s.x} $y={s.y}>
            {s.icon}
            <span>{s.label.map((line) => <React.Fragment key={line}>{line}<br /></React.Fragment>)}</span>
          </Shortcut>
        ))}
        <ServerManager />
        <TaskManager />
        <Explorer />
        <CopyDialog />
      </Desktop>
      <Taskbar>
        <TaskButton $w={35} aria-label="Пуск">
          <svg width="18" height="18"><path d="M0 3l7-1v6.500H0zM8 1.800L18 0v8.500H8zM0 9.500h7V16l-7-1zM8 9.500h10V18L8 16.200z" fill="#fff" /></svg>
        </TaskButton>
        <TaskButton $w={39} $open aria-label="Диспетчер серверов"><ServerToolIcon size={22} /></TaskButton>
        <TaskButton $w={43} $open aria-label="PowerShell">
          <svg width="20" height="18"><path d="M4 1h15l-3 15H1z" fill="#2a6cae" stroke="#8fc3e6" /><path d="M7 4l5 4.500L5 13M11 13h4" stroke="#fff" strokeWidth="1.800" fill="none" /></svg>
        </TaskButton>
        <TaskButton $w={38} $progress $stack aria-label="Проводник">
          <svg width="22" height="22" viewBox="0 0 22 22">
            <path d="M0 4h7l2 2h11v13H0z" fill="#e8c75c" />
            <path d="M2 2h6v4H2zM12 3h5v4h-5z" fill="#fff" />
            <path d="M2 2h4v2H2z" fill="#3a9f4a" /><path d="M8 3h3v2H8z" fill="#c94030" />
            <path d="M1 8h21l-1 11H1z" fill="#f8e596" />
            <path d="M4 21v-6c0-2 2-3 4-3h6c3 0 5 1 5 3v6h-3v-5H7v5z" fill="#7fbfe4" stroke="#4e98c6" strokeWidth="0.700" />
          </svg>
        </TaskButton>
        <TaskButton $w={40} $open aria-label="Диспетчер задач"><MonitorIcon size={22} /></TaskButton>
        <Tray>
          <span>38</span>
          <svg width="9" height="9"><path d="M.5.5h8v8h-8z" fill="#4e95ac" stroke="#a8dcec" /></svg>
          <svg width="12" height="11"><path d="M3.500 1.500h8v6h-8z" fill="#8fd0e6" stroke="#2f5f70" /><path d="M6 10h5M1 1h3v4H1zM2.500 5v5" stroke="#48707e" fill="#dcecf2" /></svg>
          <svg width="11" height="11"><path d="M0 4h2l4-4v10L2 7H0z" fill="#eaf4f8" stroke="#5a8798" strokeWidth="0.600" /><circle cx="7.500" cy="7.500" r="3.200" fill="#d8392f" /><path d="M6.200 6.200l2.600 2.600M8.800 6.200L6.200 8.800" stroke="#fff" /></svg>
          <span>&nbsp;ENG</span>
          <Clock>14:54<br />04.10.2015</Clock>
        </Tray>
      </Taskbar>
    </Screen>
  );
}
